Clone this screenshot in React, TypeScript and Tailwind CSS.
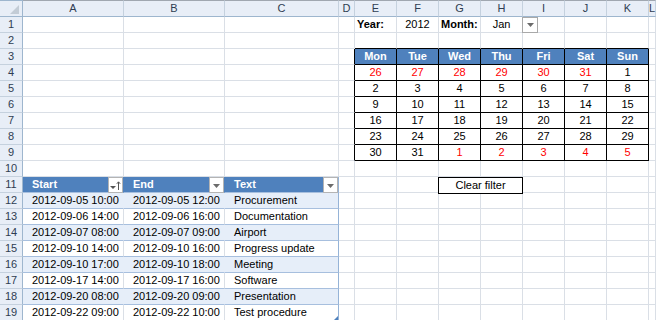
import React from 'react'

const COLS = ['A', 'B', 'C', 'D', 'E', 'F', 'G', 'H', 'I', 'J', 'K', 'L']
const DAYS = ['Mon', 'Tue', 'Wed', 'Thu', 'Fri', 'Sat', 'Sun']

// calendar weeks, rows 4-9; red = day outside the month
const WEEKS = [
  [26, 27, 28, 29, 30, 31, 1],
  [2, 3, 4, 5, 6, 7, 8],
  [9, 10, 11, 12, 13, 14, 15],
  [16, 17, 18, 19, 20, 21, 22],
  [23, 24, 25, 26, 27, 28, 29],
  [30, 31, 1, 2, 3, 4, 5],
]

const EVENTS = [
  ['2012-09-05 10:00', '2012-09-05 12:00', 'Procurement'],
  ['2012-09-06 14:00', '2012-09-06 16:00', 'Documentation'],
  ['2012-09-07 08:00', '2012-09-07 09:00', 'Airport'],
  ['2012-09-10 14:00', '2012-09-10 16:00', 'Progress update'],
  ['2012-09-10 17:00', '2012-09-10 18:00', 'Meeting'],
  ['2012-09-17 14:00', '2012-09-17 16:00', 'Software'],
  ['2012-09-20 08:00', '2012-09-20 09:00', 'Presentation'],
  ['2012-09-22 09:00', '2012-09-22 10:00', 'Test procedure'],
]

const Arrow = () => (
  <svg width="7" height="4" viewBox="0 0 7 4">
    <path d="M0 0h7L3.5 4z" fill="#6b6b6b" />
  </svg>
)

const FilterButton = ({ sorted }: { sorted?: boolean }) => (
  <div className="absolute right-0 top-0 flex h-[16px] w-[15px] items-center justify-center border border-[#b4b4b4] bg-white">
    {sorted ? (
      <svg width="11" height="11" viewBox="0 0 11 11">
        <path d="M0 6h6L3 9z" fill="#555" />
        <path d="M8.5 10V2M6.8 3.8 8.5 1.8l1.7 2" stroke="#555" strokeWidth="1" fill="none" />
      </svg>
    ) : (
      <div className="mt-[2px]">
        <Arrow />
      </div>
    )}
  </div>
)

function Cell({ r, c }: { r: number; c: number }) {
  const isCal = c >= 4 && c <= 10 && r >= 3 && r <= 9
  const isTable = c <= 2 && r >= 11 && r <= 19
  const isBand = isTable && r >= 12 && r % 2 === 0

  let right = 'border-r-[#dadfe6]'
  if (isCal || (c === 3 && r >= 3 && r <= 9)) right = 'border-r-black'
  else if (isTable && c === 2) right = 'border-r-[#95b3d7]'
  else if (isTable && r === 11) right = 'border-r-[#4f81bd]'
  else if (isBand) right = 'border-r-[#e6eef9]'

  let bottom = 'border-b-[#dadfe6]'
  if (isCal || (r === 2 && c >= 4 && c <= 10)) bottom = 'border-b-black'
  else if (isTable) bottom = 'border-b-[#a7bfde]'

  let fill = 'bg-white text-black'
  if ((isTable && r === 11) || (isCal && r === 3)) fill = 'bg-[#4f81bd] text-white font-bold'
  else if (isBand) fill = 'bg-[#e6eef9] text-black'

  let content: React.ReactNode = null
  let align = 'text-left pl-[2px]'

  if (r === 1 && c === 4) content = <span className="font-bold">Year:</span>
  if (r === 1 && c === 5) {
    content = '2012'
    align = 'text-center'
  }
  if (r === 1 && c === 6) content = <span className="font-bold">Month:</span>
  if (r === 1 && c === 7) {
    content = 'Jan'
    align = 'text-center'
  }
  if (r === 1 && c === 8) {
    content = (
      <div className="absolute -left-px top-0 flex h-[16px] w-[16px] items-center justify-center border border-[#a9a9a9] bg-white">
        <Arrow />
      </div>
    )
  }

  if (isCal) {
    align = 'text-center'
    if (r === 3) content = DAYS[c - 4]
    else {
      const week = r - 4
      const day = WEEKS[week][c - 4]
      const red = (week === 0 && day > 7) || (week === 5 && day < 7)
      content = <span className={red ? 'text-[#ff0000]' : ''}>{day}</span>
    }
  }

  if (isTable) {
    align = 'text-left pl-[9px]'
    if (r === 11) {
      content = (
        <>
          {['Start', 'End', 'Text'][c]}
          <FilterButton sorted={c === 0} />
        </>
      )
    } else {
      content = EVENTS[r - 12][c]
      if (c === 2 && r === 19) {
        content = (
          <>
            {content}
            <svg className="absolute bottom-0 right-0" width="4" height="4" viewBox="0 0 4 4">
              <path d="M4 0v4H0z" fill="#4f81bd" />
            </svg>
          </>
        )
      }
    }
  }

  if (r === 11 && c === 6) {
    content = (
      <div className="absolute -left-px top-0 z-10 flex h-[17px] w-[85px] items-center justify-center border border-black bg-white text-black">
        Clear filter
      </div>
    )
  }

  return (
    <div className={`relative whitespace-nowrap border-r border-b text-[11px] leading-[15px] ${right} ${bottom} ${fill} ${align}`}>
      {content}
    </div>
  )
}

export default function App() {
  const rows = Array.from({ length: 19 }, (_, i) => i + 1)

  return (
    <div
      className="grid h-[320px] w-[656px] grid-cols-[23px_101px_101px_114px_16px_repeat(7,42px)_1fr] grid-rows-[17px_repeat(19,16px)] overflow-hidden bg-white"
      style={{ fontFamily: '"Liberation Sans", Arial, sans-serif' }}
    >
      {/* corner */}
      <div className="relative border-t border-r border-b border-[#9eb6ce] bg-[#e8eef7]">
        <svg className="absolute bottom-[2px] right-[3px]" width="9" height="9" viewBox="0 0 9 9">
          <path d="M9 0v9H0z" fill="#c3ccd6" />
        </svg>
      </div>

      {/* column headers */}
      {COLS.map((col) => (
        <div
          key={col}
          className="border-t border-r border-b border-t-[#a0a7b0] border-r-[#c5d1de] border-b-[#9eb6ce] bg-[#e8eef7] text-center text-[11px] leading-[14px] text-[#2f3d52]"
        >
          {col}
        </div>
      ))}

      {rows.map((r) => (
        <React.Fragment key={r}>
          <div className="border-r border-b border-r-[#9eb6ce] border-b-[#c5d1de] bg-[#e8eef7] text-center text-[11px] leading-[15px] text-[#2f3d52]">
            {r}
          </div>
          {COLS.map((_, c) => (
            <Cell key={c} r={r} c={c} />
          ))}
        </React.Fragment>
      ))}
    </div>
  )
}
